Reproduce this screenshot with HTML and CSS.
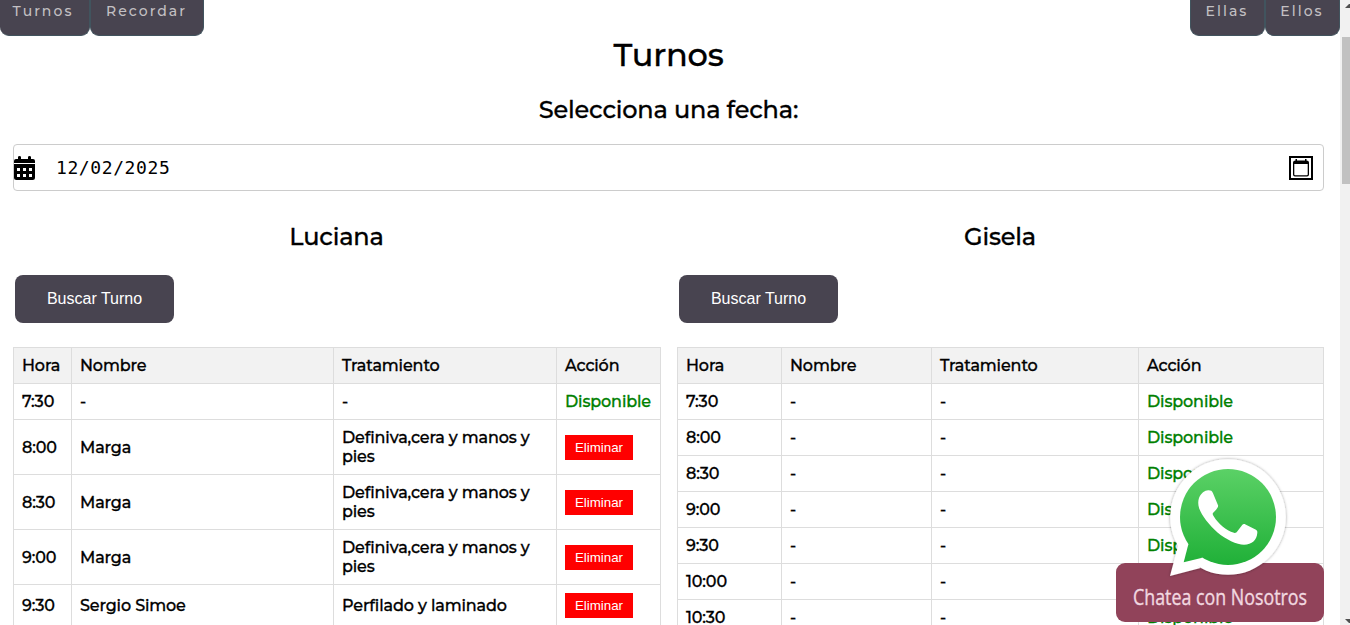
FILE: index.html
```html
<!DOCTYPE html>
<html lang="es">
<head>
<meta charset="utf-8">
<title>Turnos</title>
<link rel="stylesheet" href="styles.css">
</head>
<body>
<div class="shell">
<div class="page">
  <nav class="nav">
    <div class="nav-group">
      <a class="tab tab-turnos">Turnos</a><a class="tab tab-recordar">Recordar</a>
    </div>
    <div class="nav-group">
      <a class="tab tab-side">Ellas</a><a class="tab tab-side">Ellos</a>
    </div>
  </nav>
  <main class="main">
    <h1 class="title">Turnos</h1>
    <h2 class="subtitle">Selecciona una fecha:</h2>
    <div class="date">
      <svg class="date-icon" width="22" height="24" viewBox="0 0 22 24"><path d="M0 7V5q0-2 2-2h2V1.200Q4 0 5.500 0T7 1.200V3h7V1.200Q14 0 15.500 0T17 1.200V3h2q2 0 2 2v2z"/><path fill-rule="evenodd" d="M0 8h21v13.500q0 2.500-2.500 2.500h-16Q0 24 0 21.500zM3 12v3h3v-3zM9 12v3h3v-3zM15 12v3h3v-3zM3 18v3h3v-3zM9 18v3h3v-3zM15 18v3h3v-3z"/></svg>
      <span class="date-value">12/02/2025</span>
      <svg class="picker" width="24" height="24" viewBox="0 0 24 24"><path d="M1 1h22v22H1z" fill="none" stroke="#000" stroke-width="2"/><path fill-rule="evenodd" d="M6.500 3H8v1.500h8V3h1.500v1.500q2.500 0 2.500 2V18.500q0 2-2 2H6q-2 0-2-2V6.500q0-2 2.500-2zM5.300 8v10.500q0 .8.8.8h11.800q.8 0 .8-.8V8z"/></svg>
    </div>
    <div class="columns">
      <section class="column">
        <h2 class="name">Luciana</h2>
        <button class="search">Buscar Turno</button>
        <table class="table">
          <colgroup><col class="l1"><col class="l2"><col class="l3"><col class="l4"></colgroup>
          <tr><th>Hora</th><th>Nombre</th><th>Tratamiento</th><th>Acción</th></tr>
          <tr><td>7:30</td><td>-</td><td>-</td><td class="free">Disponible</td></tr>
          <tr><td>8:00</td><td>Marga</td><td>Definiva,cera y manos y<br>pies</td><td><button class="delete">Eliminar</button></td></tr>
          <tr><td>8:30</td><td>Marga</td><td>Definiva,cera y manos y<br>pies</td><td><button class="delete">Eliminar</button></td></tr>
          <tr><td>9:00</td><td>Marga</td><td>Definiva,cera y manos y<br>pies</td><td><button class="delete">Eliminar</button></td></tr>
          <tr><td>9:30</td><td>Sergio Simoe</td><td>Perfilado y laminado</td><td><button class="delete">Eliminar</button></td></tr>
        </table>
      </section>
      <section class="column">
        <h2 class="name">Gisela</h2>
        <button class="search">Buscar Turno</button>
        <table class="table">
          <colgroup><col class="r1"><col class="r2"><col class="r3"><col class="r4"></colgroup>
          <tr><th>Hora</th><th>Nombre</th><th>Tratamiento</th><th>Acción</th></tr>
          <tr><td>7:30</td><td>-</td><td>-</td><td class="free">Disponible</td></tr>
          <tr><td>8:00</td><td>-</td><td>-</td><td class="free">Disponible</td></tr>
          <tr><td>8:30</td><td>-</td><td>-</td><td class="free">Disponible</td></tr>
          <tr><td>9:00</td><td>-</td><td>-</td><td class="free">Disponible</td></tr>
          <tr><td>9:30</td><td>-</td><td>-</td><td class="free">Disponible</td></tr>
          <tr><td>10:00</td><td>-</td><td>-</td><td class="free">Disponible</td></tr>
          <tr><td>10:30</td><td>-</td><td>-</td><td class="free">Disponible</td></tr>
        </table>
      </section>
    </div>
  </main>
</div>
<div class="scrollbar">
  <svg class="arrow" width="10" height="37" viewBox="0 0 10 37"><path d="M5 8l4-4h1v4z" fill="#505050"/></svg>
  <div class="thumb"></div>
  <svg class="arrow arrow-down" width="10" height="10" viewBox="0 0 10 10"><path d="M5 4h5v4H9z" fill="#505050"/></svg>
</div>
</div>
<a class="chat">
  <svg width="208" height="168" viewBox="1116 454 208 168">
    <defs>
      <linearGradient id="green" gradientUnits="userSpaceOnUse" x1="0" y1="469" x2="0" y2="565"><stop offset="0" stop-color="#5bd166"/><stop offset="1" stop-color="#20b038"/></linearGradient>
      <filter id="shadow" x="-10%" y="-10%" width="120%" height="120%"><feDropShadow dx="0" dy="0" stdDeviation="1.800" flood-color="#000" flood-opacity=".4"/></filter>
    </defs>
    <rect x="1116" y="563" width="208" height="59" rx="9" fill="#91435a"/>
    <g filter="url(#shadow)" fill="#fff"><circle cx="1228" cy="517" r="57.800"/><path d="M1170 576l8.200-30.500 22.300 22.500z"/></g>
    <g fill="url(#green)"><circle cx="1228" cy="517" r="48"/><path d="M1183.700 562.300l4.600-17.700 6-4 11 14.500-4 3z"/></g>
    <path fill="#fff" d="M1199 498c2-5 6-8 9.500-7.800 2.500 0 3.500.6 4.500 3l5 12c.8 2-2.500 5.500-5 7.800-.8 1 0 2 .7 3.200 5 8 12 14 20.300 16.500 1.500.4 2 .2 3-1l5-6.500c1-1.300 2-1.500 3.500-.8l10 5c1.500.8 2 1.600 1.800 3.600-.5 7-5.300 11.500-13.300 11.700-7 0-18.500-5.400-26.500-12.200-8.500-7.500-16-17.500-18.300-24-1.300-4-1.200-7.500-.2-10.500z"/>
    <text class="chat-text" x="1133" y="604.500" textLength="174" lengthAdjust="spacingAndGlyphs">Chatea con Nosotros</text>
  </svg>
</a>
</body>
</html>
```
FILE: styles.css
```css
* { box-sizing: border-box; }
body {
  margin: 0;
  height: 625px;
  overflow: hidden;
  background: #fff;
  color: #000;
  font: 500 16px/19px Montserrat, Inter, sans-serif;
}
.shell { display: flex; height: 625px; overflow: hidden; }
.page { width: 1340px; height: 625px; overflow: hidden; }
.nav { display: flex; justify-content: space-between; height: 36px; }
.nav-group { display: flex; }
.tab {
  display: flex;
  justify-content: center;
  height: 36px;
  padding: 2px 1px 0 0;
  background: #484450;
  border: 1px solid #41545e;
  border-top: 0;
  border-radius: 0 0 9px 9px;
  color: #c3c0c3;
  font-size: 14px;
  letter-spacing: 2.050px;
}
.tab-turnos { width: 90px; padding-right: 3px; border-left: 0; }
.tab-recordar { width: 114px; }
.tab-side { width: 75px; }
.main { padding: 0 16px 0 13px; }
.title, .subtitle, .name {
  margin: 0;
  font-weight: 500;
  text-align: center;
  letter-spacing: -.18px;
  -webkit-text-stroke: .3px currentColor;
}
.title { height: 38px; font-size: 32px; line-height: 38px; }
.subtitle { margin-top: 21px; height: 30px; font-size: 24px; line-height: 30px; }
.date {
  display: flex;
  align-items: center;
  height: 47px;
  margin-top: 19px;
  padding-right: 10px;
  border: 1px solid #ccc;
  border-radius: 4px;
}
.date-value {
  flex: 1;
  padding-left: 20px;
  font: 18px/24px "DejaVu Sans Mono", monospace;
  letter-spacing: .6px;
}
.columns { display: grid; grid-template-columns: 647px 646px; gap: 17px; margin-top: 31px; }
.name { height: 30px; font-size: 24px; line-height: 30px; }
.search {
  display: block;
  width: 159px;
  height: 48px;
  margin: 23px 0 24px 2px;
  padding: 0;
  border: 0;
  border-radius: 8px;
  background: #484450;
  color: #fff;
  font: 16px "Liberation Sans", Arial, sans-serif;
}
.table {
  width: 100%;
  table-layout: fixed;
  border-collapse: collapse;
  letter-spacing: -.13px;
  -webkit-text-stroke: .3px currentColor;
}
.table th, .table td {
  padding: 8px;
  border: 1px solid #ddd;
  text-align: left;
  font-weight: 500;
  white-space: nowrap;
}
.table th { background: #f2f2f2; }
.table .free { color: #008000; }
.l1 { width: 58px; }
.l2 { width: 262px; }
.l3 { width: 223px; }
.l4 { width: 104px; }
.r1 { width: 104px; }
.r2 { width: 150px; }
.r3 { width: 207px; }
.r4 { width: 185px; }
.delete {
  display: block;
  width: 68px;
  height: 25px;
  padding: 0;
  border: 0;
  background: #f00;
  color: #fff;
  font: 13.333px "Liberation Sans", Arial, sans-serif;
  letter-spacing: 0;
  -webkit-text-stroke: 0;
}
.scrollbar {
  display: flex;
  flex-direction: column;
  width: 10px;
  height: 625px;
  background: #f1f1f1;
}
.arrow { display: block; }
.thumb { height: 147px; margin-left: 2px; background: #c1c1c1; }
.arrow-down { margin-top: auto; }
.chat { position: absolute; left: 1116px; top: 454px; height: 168px; }
.chat svg { display: block; }
.chat-text {
  font: 21px "Open Sans", sans-serif;
  fill: #f2d9e0;
  stroke: #f2d9e0;
  stroke-width: .35px;
}
```
